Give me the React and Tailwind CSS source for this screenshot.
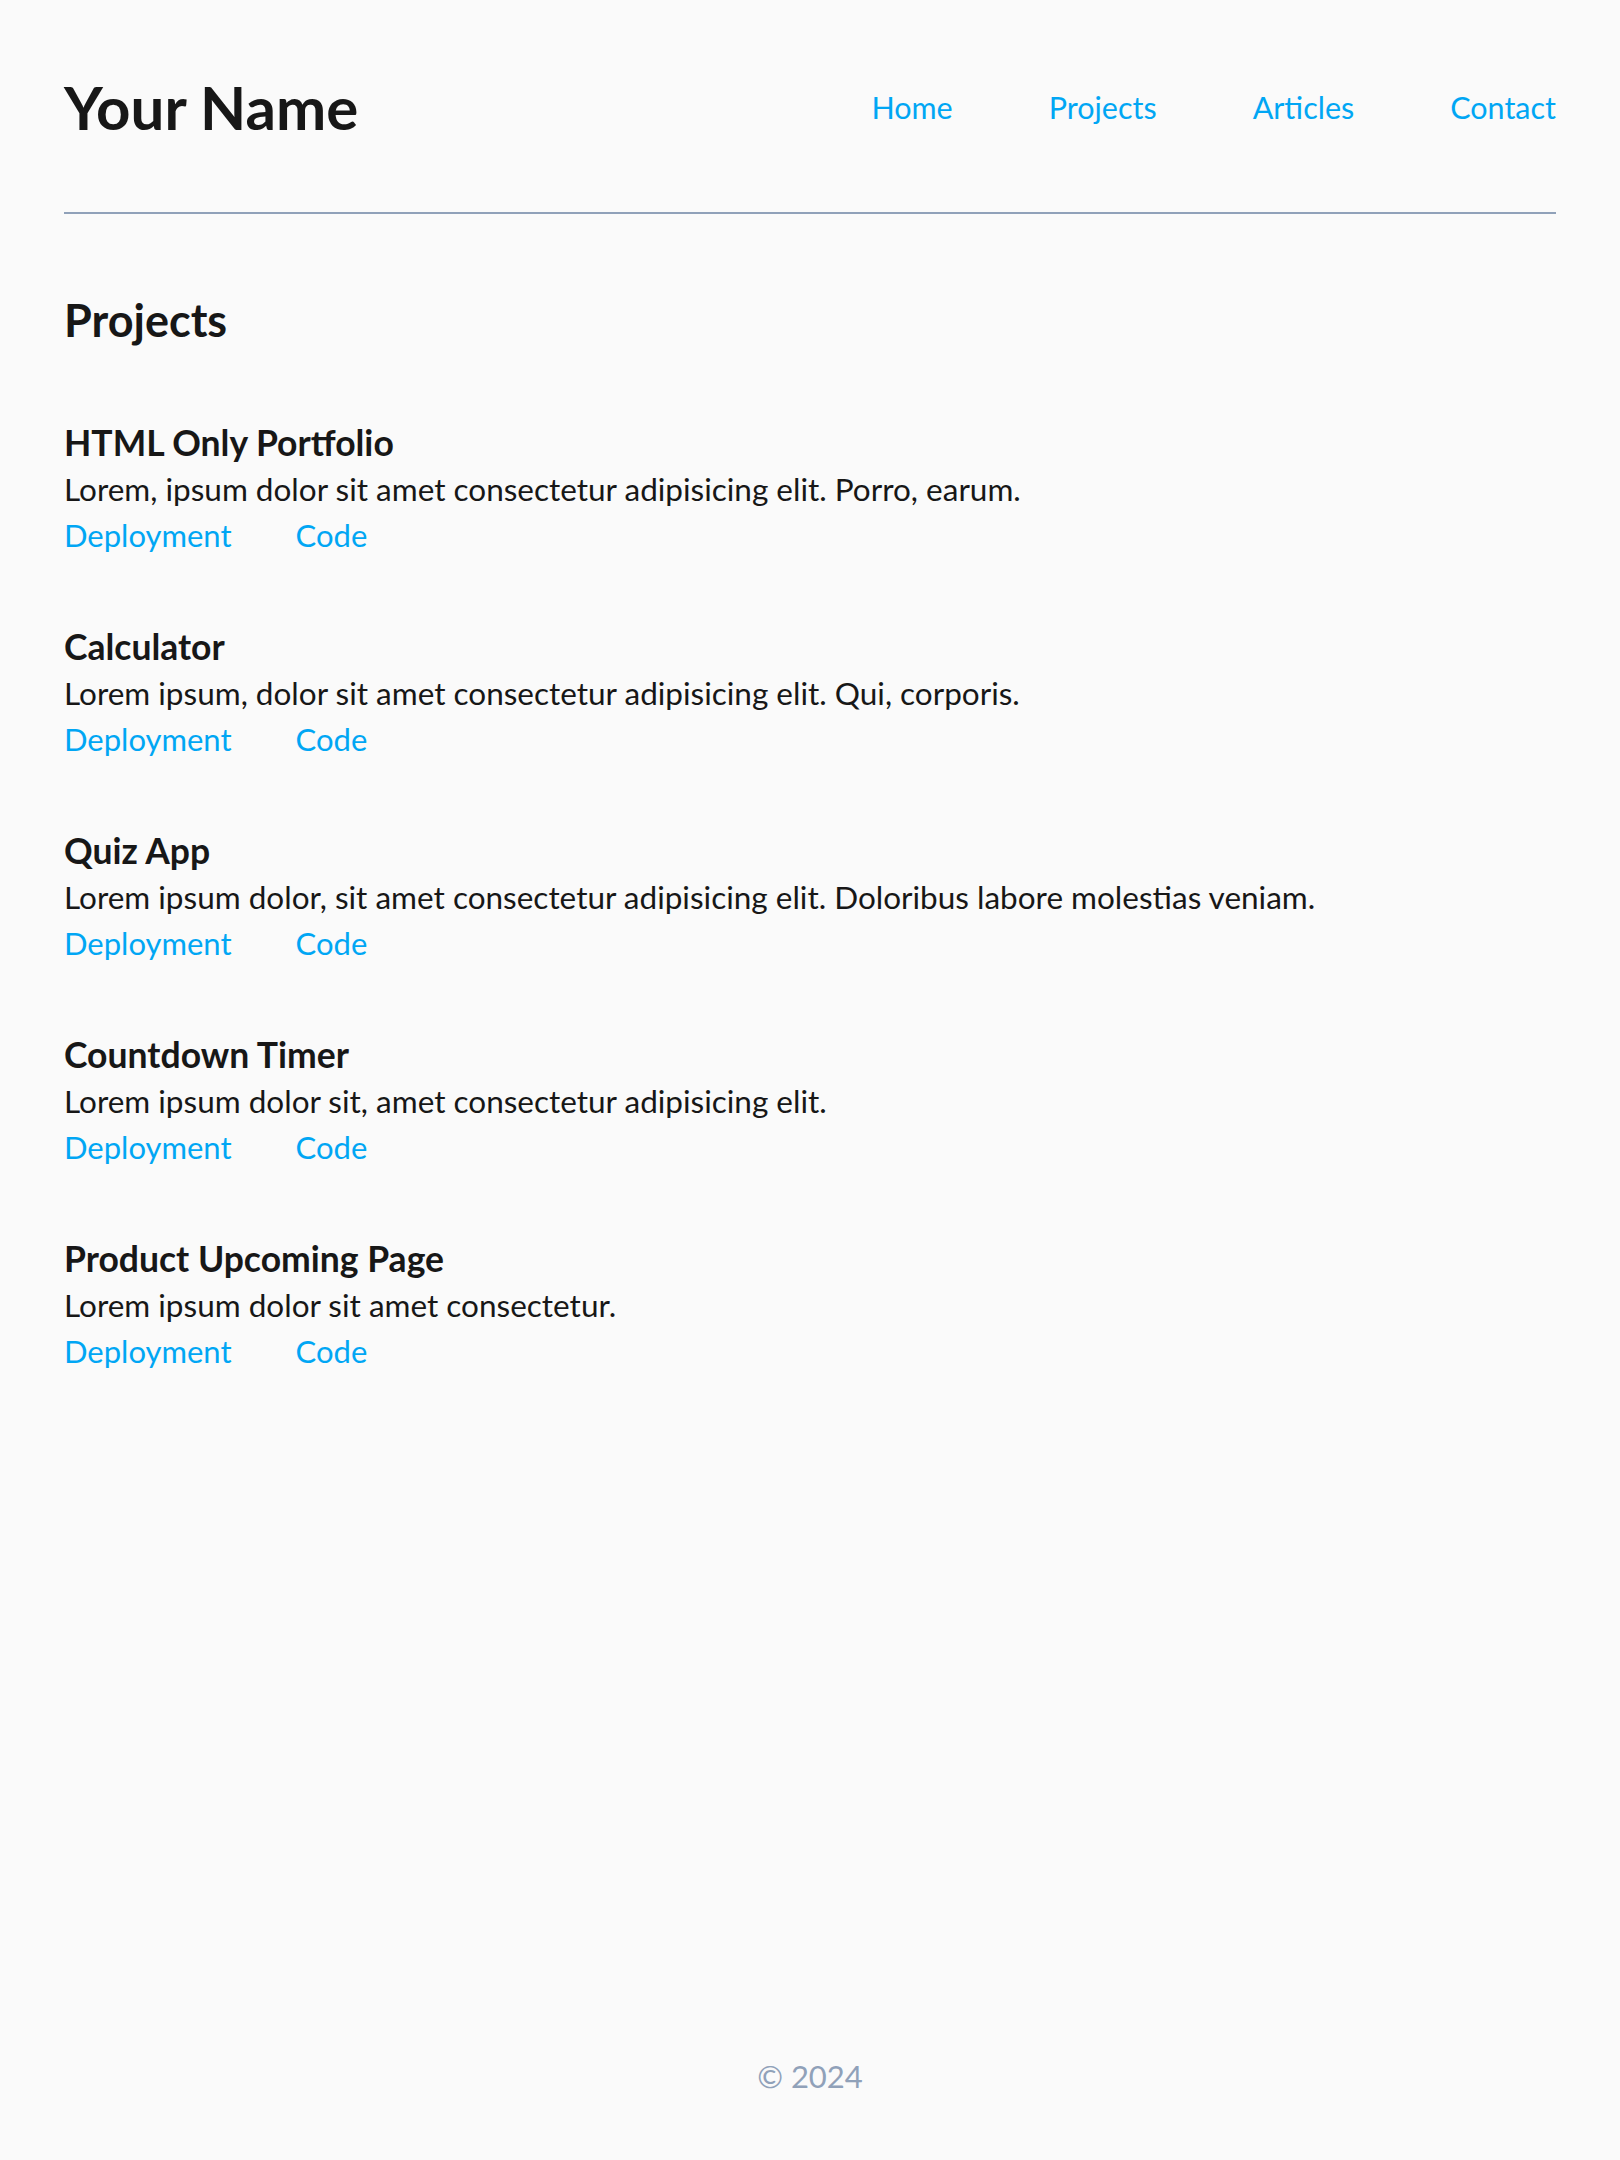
const NAV = ['Home', 'Projects', 'Articles', 'Contact']

const PROJECTS = [
  {
    title: 'HTML Only Portfolio',
    text: 'Lorem, ipsum dolor sit amet consectetur adipisicing elit. Porro, earum.',
  },
  {
    title: 'Calculator',
    text: 'Lorem ipsum, dolor sit amet consectetur adipisicing elit. Qui, corporis.',
  },
  {
    title: 'Quiz App',
    text: 'Lorem ipsum dolor, sit amet consectetur adipisicing elit. Doloribus labore molestias veniam.',
  },
  {
    title: 'Countdown Timer',
    text: 'Lorem ipsum dolor sit, amet consectetur adipisicing elit.',
  },
  {
    title: 'Product Upcoming Page',
    text: 'Lorem ipsum dolor sit amet consectetur.',
  },
]

function Project({ title, text }) {
  return (
    <article className="flex flex-col">
      <h3 className="text-[35.5px] font-bold leading-[46px]">{title}</h3>
      <p className="text-[31.5px] leading-[46px]">{text}</p>
      <div className="flex gap-16 text-[31px] leading-[46px] text-sky-500">
        <a href="#">Deployment</a>
        <a href="#">Code</a>
      </div>
    </article>
  )
}

export default function App() {
  return (
    <div className="flex min-h-screen flex-col bg-[#fafafa] px-16 text-[#171717] font-['Lato','Noto_Sans',sans-serif]">
      <header className="flex items-center justify-between border-b-2 border-slate-400 pt-[77px] pb-[75px]">
        <h1 className="text-[60px] font-bold leading-[60px]">Your Name</h1>
        <nav className="flex gap-24 text-[30.5px] leading-[40px] text-sky-500">
          {NAV.map((item) => (
            <a key={item} href="#">{item}</a>
          ))}
        </nav>
      </header>

      <main className="pt-[84px]">
        <h2 className="text-[45px] font-bold leading-[44px]">Projects</h2>
        <div className="mt-[78px] flex flex-col gap-[66px]">
          {PROJECTS.map((project) => (
            <Project key={project.title} {...project} />
          ))}
        </div>
      </main>

      <footer className="mt-auto pb-16 text-center text-[31px] leading-10 text-slate-400">© 2024</footer>
    </div>
  )
}
